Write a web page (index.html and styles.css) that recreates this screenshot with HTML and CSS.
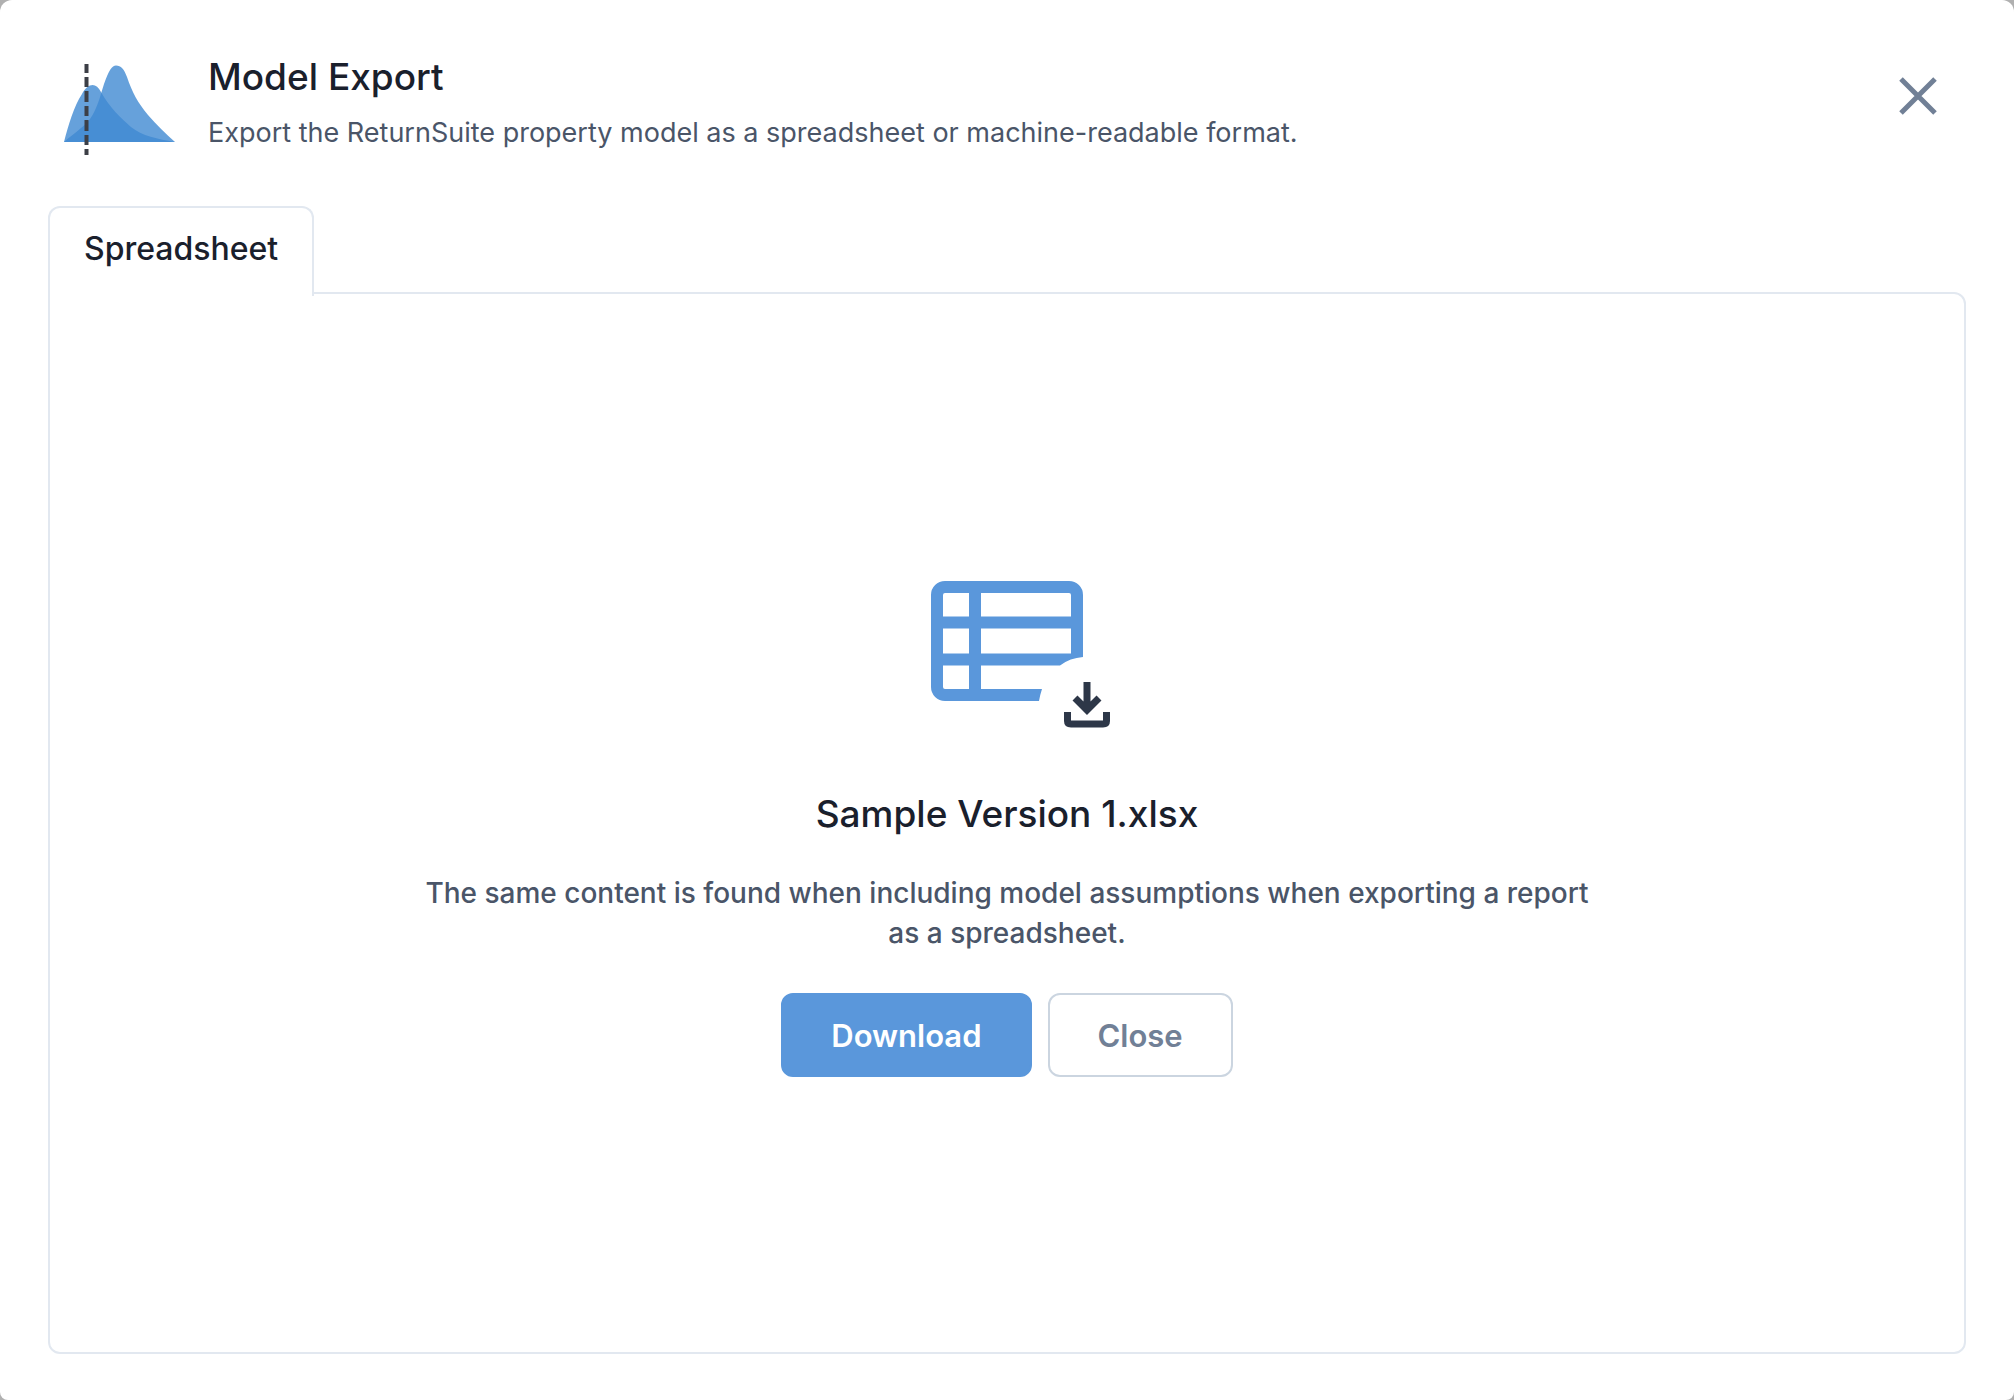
FILE: index.html
```html
<!DOCTYPE html>
<html lang="en">
<head>
<meta charset="utf-8">
<meta name="viewport" content="width=device-width, initial-scale=1">
<title>Model Export</title>
<link rel="stylesheet" href="styles.css">
</head>
<body>
<main class="modal" role="dialog" aria-labelledby="modal-title">
  <header class="modal-header">
    <svg class="logo" viewBox="64 64 112 92" aria-hidden="true">
      <path d="M64 142C68 126 74 106 82 94C88 83 96 82 101 92C110 108 121 118 131 127C142 136 158 139 175 142Z" fill="#4089d2" fill-opacity=".8"/>
      <path d="M64 142C74 133 83 128 90 119C97 109 100 97 104 84C109 70 112 65.500 116 65.500C121 65.500 124 69 127 77C132 92 138 103 148 115C156 124 166 134 175 142Z" fill="#4089d2" fill-opacity=".8"/>
      <path d="M86.500 64V73M86.500 77V87M86.500 91V102M86.500 106V116M86.500 120V131M86.500 135V145M86.500 149V155" stroke="#3c3f46" stroke-width="4"/>
    </svg>
    <div class="heading">
      <h1 class="title" id="modal-title">Model Export</h1>
      <p class="subtitle">Export the ReturnSuite property model as a spreadsheet or machine-readable format.</p>
    </div>
    <button class="dismiss" type="button" aria-label="Dismiss">
      <svg class="dismiss-icon" viewBox="0 0 38 38" aria-hidden="true"><path d="M2 2L36 36M36 2L2 36" stroke="#718096" stroke-width="5"/></svg>
    </button>
  </header>
  <div class="tabs" role="tablist">
    <button class="tab" type="button" role="tab" id="tab-spreadsheet" aria-selected="true" aria-controls="panel">Spreadsheet</button>
  </div>
  <section class="panel" role="tabpanel" id="panel" aria-labelledby="tab-spreadsheet">
    <svg class="file-icon" viewBox="904 569 206 160" aria-hidden="true">
      <path fill="#5a97db" fill-rule="evenodd" d="M945 581H1069A14 14 0 0 1 1083 595V657Q1070 658 1060 665.400H981V689H1042Q1040 695 1039 701H945A14 14 0 0 1 931 687V595A14 14 0 0 1 945 581ZM943 595V616.600H969V593H945A2 2 0 0 0 943 595ZM981 593V616.600H1071V595A2 2 0 0 0 1069 593ZM943 628.400V653.600H969V628.400ZM981 628.400V653.600H1071V628.400ZM943 665.400V687A2 2 0 0 0 945 689H969V665.400Z"/>
      <path d="M1087 682V709M1075 698L1087 710L1099 698" fill="none" stroke="#2d3748" stroke-width="7"/>
      <path d="M1067.500 712V721Q1067.500 724 1071 724H1103Q1106.500 724 1106.500 721V712" fill="none" stroke="#2d3748" stroke-width="7"/>
    </svg>
    <h2 class="title file-name">Sample Version 1.xlsx</h2>
    <p class="note">The same content is found when including model assumptions when exporting a report as a spreadsheet.</p>
    <div class="actions">
      <button class="button button-primary" type="button">Download</button>
      <button class="button" type="button">Close</button>
    </div>
  </section>
</main>
</body>
</html>
```
FILE: styles.css
```css
* {
  box-sizing: border-box;
}

body {
  margin: 0;
  background: #b0b0b0;
  color: #1a202c;
  font-family: Inter, "Liberation Sans", sans-serif;
}

button {
  font-family: inherit;
  cursor: pointer;
}

.modal {
  display: flex;
  flex-direction: column;
  min-height: 100vh;
  padding: 52px 48px 46px;
  background: #fff;
  border-radius: 12px 12px 8px 8px;
}

.modal-header {
  display: flex;
  align-items: flex-start;
  padding: 0 16px;
}

.logo {
  width: 112px;
  height: 92px;
  margin: 12px 32px 0 0;
}

.heading {
  flex: 1;
}

.title {
  margin: 0;
  font-size: 37px;
  line-height: 50px;
  font-weight: 500;
}

.subtitle {
  margin: 11px 0 0;
  color: #4a5568;
  font-size: 27px;
  line-height: 40px;
}

.dismiss {
  display: flex;
  margin-top: 12px;
  padding: 13px;
  border: 0;
  background: none;
}

.dismiss-icon {
  width: 38px;
  height: 38px;
}

.tabs {
  display: flex;
  margin-top: 50px;
}

.tab {
  position: relative;
  height: 90px;
  margin-bottom: -4px;
  padding: 0 34px 8px;
  border: 2px solid #e2e8f0;
  border-bottom: 0;
  border-radius: 12px 12px 0 0;
  background: #fff;
  color: #1a202c;
  font-size: 32px;
  font-weight: 500;
}

.panel {
  display: flex;
  flex: 1;
  flex-direction: column;
  align-items: center;
  justify-content: center;
  padding: 32px;
  border: 2px solid #e2e8f0;
  border-radius: 0 12px 12px 12px;
}

.file-icon {
  width: 206px;
  height: 160px;
}

.file-name {
  margin-top: 60px;
}

.note {
  max-width: 1180px;
  margin: 34px 0 40px;
  color: #4a5568;
  font-size: 28px;
  line-height: 40px;
  font-weight: 500;
  text-align: center;
}

.actions {
  display: flex;
  gap: 16px;
}

.button {
  height: 84px;
  padding: 0 48px;
  border: 2px solid #cbd5e0;
  border-radius: 12px;
  background: #fff;
  color: #718096;
  font-size: 31px;
  font-weight: 600;
}

.button-primary {
  border-color: #5a97db;
  background: #5a97db;
  color: #fff;
}
```
